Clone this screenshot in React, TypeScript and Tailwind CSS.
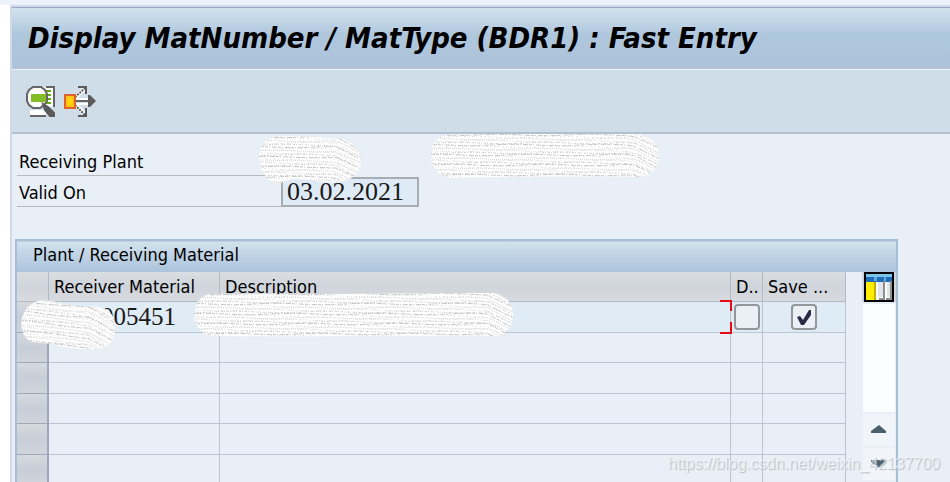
import type { ReactNode } from "react";

type ScribbleProps = {
  width: number;
  height: number;
  outline: string;
  id: string;
  tilt?: number;
  className: string;
};

const greys = ["#c4c4c4", "#e2e2e2", "#d2d2d2", "#e8e8e8", "#cccccc"];
const dashes = ["3 1 1 2 5 1", "1 1", "1 2 2 1", "1 3 2 2", "7 1 2 1 1 2"];

// White marker scribble that hides confidential values
const Scribble = ({ width, height, outline, id, tilt = 0, className }: ScribbleProps) => {
  const lines = [];
  for (let i = -8; i < height / 2 + 4; i++) {
    const y = i * 2 + 1;
    let d = `M-4 ${y}`;
    for (let x = 6; x < width + 8; x += 9) {
      const wave = Math.sin(x * 0.07 + i * 2.3) * 0.7;
      const fall = x > width - 26 ? (x - width + 26) * 0.5 : 0;
      d += ` L${x} ${(y + wave + fall + (x * tilt) / 100).toFixed(1)}`;
    }
    lines.push(
      <path
        key={i}
        d={d}
        fill="none"
        stroke={greys[(i + 10) % 5]}
        strokeWidth="1"
        strokeDasharray={dashes[(i * 3 + 30) % 5]}
        strokeDashoffset={(i * 7) % 11}
      />
    );
  }
  return (
    <svg
      width={width}
      height={height}
      aria-hidden="true"
      className={`absolute z-10 pointer-events-none ${className}`}
    >
      <clipPath id={id}>
        <path d={outline} />
      </clipPath>
      <path d={outline} fill="#fff" />
      <g clipPath={`url(#${id})`}>{lines}</g>
    </svg>
  );
};

const DetailIcon = () => (
  <svg width="32" height="34" viewBox="0 0 32 34" aria-hidden="true">
    <path d="M18 3h11v20H18z" fill="#fff" />
    <path d="M21 3h8v20" fill="none" stroke="#666" strokeWidth="2" />
    <path d="M20 7h6M22 11h4M22 15h4M21 19h5" stroke="#5fae0a" strokeWidth="2" />
    <path d="M5 26h16v5H5z" fill="#fff" />
    <path d="M5 32h16" stroke="#666" strokeWidth="2" />
    <path
      d="M8 3h8l4 3 2 4v7l-3 4-4 3H8l-4-3-2-4v-7l2-4z"
      fill="#fff"
      stroke="#666"
      strokeWidth="2"
    />
    <path d="M6 10h15v8H6z" fill="#84bd27" />
    <path d="M18 20l5 3 6 6v3h-4l-5-6z" fill="#5b5b5b" stroke="#5b5b5b" strokeWidth="2" />
  </svg>
);

const SpreadIcon = () => (
  <svg width="34" height="34" viewBox="0 0 34 34" aria-hidden="true">
    <path d="M12 15h14M12 20h14" stroke="#fff" strokeWidth="2" />
    <path d="M12 17h15" stroke="#666" strokeWidth="2" />
    <path d="M25 11h2l6 6-6 6h-2z" fill="#5b5b5b" />
    <path d="M13 13L22 4M13 21l9 9" stroke="#fff" strokeWidth="4" />
    <path d="M12 13L22 4M12 21l10 10" stroke="#555" strokeWidth="2" strokeDasharray="2 1" />
    <path d="M15 3h8v7M15 32h8v-8" fill="none" stroke="#5b5b5b" strokeWidth="2" />
    <path d="M2 11h10v13H2z" fill="#ffc21a" stroke="#e0622a" strokeWidth="2" />
    <path d="M5 14h4v7H5z" fill="#ffd60a" />
  </svg>
);

const ColumnsIcon = () => (
  <svg width="30" height="30" viewBox="0 0 30 30" aria-hidden="true">
    <path d="M0 0h30v30H0z" fill="#000" />
    <path d="M2 2h26v26H2z" fill="#fff" />
    <path d="M2 2h26v3H2z" fill="#7fc4ea" />
    <path d="M2 5h26v5H2z" fill="#1e6db6" />
    <path d="M10 5h3v4h-3zM20 5h2v4h-2z" fill="#5fa9dc" />
    <path d="M2 10h9v18H2z" fill="#ffed00" />
    <path d="M10 10h2v18h-2z" fill="#c4ae00" />
    <path d="M14 10h5v15h-5zM23 10h3v15h-3z" fill="#e0e5ec" />
    <path d="M19 9h2v19h-6v-2h4zM26 9h2v19h-6v-2h4z" fill="#8f8f8f" />
  </svg>
);

const Tick = ({ label, checked }: { label: string; checked?: boolean }) => (
  <label className="relative block w-[26px] h-[26px] mx-auto">
    <input
      type="checkbox"
      aria-label={label}
      defaultChecked={checked}
      className="peer block appearance-none w-full h-full rounded-sm border-2 border-[#949699] bg-[#eaf0f6]"
    />
    <svg
      viewBox="0 0 26 26"
      aria-hidden="true"
      className="absolute inset-0 pointer-events-none hidden peer-checked:block"
    >
      <path d="M6 13l3-1 3 4 6-10h2v5l-7 10h-3z" fill="#2c2b47" />
    </svg>
  </label>
);

const HeaderCell = ({ children }: { children?: ReactNode }) => (
  <th
    scope="col"
    className="h-[30px] p-0 pl-[5px] text-left font-normal whitespace-nowrap border-r border-b border-[#b0bac8] bg-linear-to-b from-[#d9dee1] via-[#d0d4dc] to-[#d8dcdf]"
  >
    {children}
  </th>
);

const cell = "p-0 border-r border-b border-[#bac4d3]";
const selector =
  "p-0 border-r-2 border-b border-[#9ba8b9] bg-linear-to-b from-[#d6dadf] via-[#c8ced7] to-[#d0d5dc]";
const emptyRows = [1, 2, 3, 4, 5];

const App = () => {
  return (
    <div className="h-screen overflow-hidden flex flex-col bg-[#eef2fa] pt-[5px] font-['DejaVu_Sans_Condensed','Noto_Sans',sans-serif] text-[18px] leading-6 text-black">
      <div className="flex-1 min-h-0 flex bg-white">
        <div className="w-[10px] shrink-0" />
        <div className="flex-1 min-w-0 flex flex-col border-l-2 border-t-2 border-[#d3d9e8] bg-[#e8eff6]">
          {/* TITLE */}
          <header className="h-[62px] shrink-0 flex items-center px-4 border-t border-b-2 border-t-[#98a9c2] border-b-[#b2c1d3] bg-linear-to-b from-[#d3e2ef] via-[#afc7dd] via-45% to-[#adc3db]">
            <h1 className="font-bold italic text-[29px] leading-8 whitespace-nowrap">
              Display MatNumber / MatType (BDR1) : Fast Entry
            </h1>
          </header>

          {/* TOOLBAR */}
          <div className="h-[65px] shrink-0 flex items-center gap-1.5 px-3 border-t border-b-2 border-t-[#edf3f8] border-b-[#b3c0d0] bg-[#cfdde8]">
            <button type="button" aria-label="Display details" className="pl-px">
              <DetailIcon />
            </button>
            <button type="button" aria-label="Distribute">
              <SpreadIcon />
            </button>
          </div>

          {/* FORM */}
          <div className="relative shrink-0 pl-[5px] pt-[11px]">
            <div className="w-[265px] h-[31px] border-b border-[#b7bbc0] pl-0.5 pt-[5px]">
              Receiving Plant
            </div>
            <div className="flex">
              <label
                htmlFor="validOn"
                className="w-[264px] h-[31px] border-b border-[#b7bbc0] pl-0.5 pt-[5px]"
              >
                Valid On
              </label>
              <input
                id="validOn"
                readOnly
                defaultValue="03.02.2021"
                className="w-[138px] h-[30px] mt-px px-1 border-2 border-[#a9adb2] bg-[#deeaf5] font-['Liberation_Serif',serif] text-[26px] leading-6 text-[#1a1a1a]"
              />
            </div>
            <Scribble
              id="plantCode"
              width={103}
              height={48}
              className="left-[246px] top-[2px]"
              outline="M12 2C25-1 60 0 78 3C92 2 102 12 103 24C103 36 94 45 82 46C66 48 48 42 34 43C22 49 11 48 6 38C-2 28-2 10 12 2Z"
            />
            <Scribble
              id="plantName"
              width={228}
              height={44}
              className="left-[419px] top-0"
              outline="M16 1C70-1 160 1 208 0C220 2 228 10 228 21C228 34 220 42 208 43C150 42 70 43 20 44C8 43 0 33 0 22C0 11 5 3 16 1Z"
            />
          </div>

          {/* MATERIALS */}
          <section
            aria-label="Plant / Receiving Material"
            className="relative mt-[32px] ml-[3px] mr-[52px] flex-1 min-h-0 flex flex-col border-2 border-b-0 border-[#a5bfd8]"
          >
            <h2 className="h-[31px] shrink-0 pl-4 pt-px border-t border-[#c5d0dd] bg-linear-to-b from-[#d2e1ed] to-[#abc3dc]">
              Plant / Receiving Material
            </h2>
            <div className="flex-1 min-h-0 flex overflow-hidden">
              <div className="flex-1 min-w-0">
                <table className="w-full table-fixed border-separate border-spacing-0">
                  <colgroup>
                    <col className="w-[32px]" />
                    <col className="w-[171px]" />
                    <col />
                    <col className="w-[32px]" />
                    <col className="w-[83px]" />
                  </colgroup>
                  <thead>
                    <tr>
                      <HeaderCell />
                      <HeaderCell>Receiver Material</HeaderCell>
                      <HeaderCell>Description</HeaderCell>
                      <HeaderCell>D..</HeaderCell>
                      <HeaderCell>Save ...</HeaderCell>
                    </tr>
                  </thead>
                  <tbody>
                    <tr className="h-[31px] bg-[#dfebf5]">
                      <td className={selector} />
                      <td
                        className={`${cell} pl-[52px] font-['Liberation_Serif',serif] text-[25px] text-[#1a1a1a]`}
                      >
                        005451
                      </td>
                      <td className={`${cell} relative`}>
                        <svg
                          width="12"
                          height="34"
                          aria-hidden="true"
                          className="absolute -right-[2px] -top-[2px]"
                        >
                          <path
                            d="M0 1h11v10M0 33h11V22"
                            fill="none"
                            stroke="#e60a14"
                            strokeWidth="2"
                          />
                        </svg>
                      </td>
                      <td className={cell}>
                        <Tick label="D" />
                      </td>
                      <td className={cell}>
                        <Tick label="Save" checked />
                      </td>
                    </tr>
                    {emptyRows.map((row) => (
                      <tr key={row} className="even:h-[30px] odd:h-[31px]">
                        <td className={selector} />
                        <td className={cell} />
                        <td className={cell} />
                        <td className={cell} />
                        <td className={cell} />
                      </tr>
                    ))}
                  </tbody>
                </table>
              </div>

              {/* SCROLL BAR */}
              <div className="w-[34px] ml-4 shrink-0 flex flex-col items-center gap-0.5">
                <button
                  type="button"
                  aria-label="Configure columns"
                  className="w-full h-[30px] shrink-0 flex justify-center bg-[#d0d5dd]"
                >
                  <ColumnsIcon />
                </button>
                <div className="w-[32px] flex-1 bg-[#fbfcfd]" />
                <button
                  type="button"
                  aria-label="Scroll up"
                  className="w-[32px] h-[32px] shrink-0 flex items-center justify-center bg-[#f1f5f9]"
                >
                  <svg width="18" height="10" aria-hidden="true">
                    <path d="M9 0l7 6v2H1V6z" fill="#4c5f6c" />
                  </svg>
                </button>
                <button
                  type="button"
                  aria-label="Scroll down"
                  className="w-[32px] h-[32px] shrink-0 mb-0.5 flex items-center justify-center bg-[#f1f5f9]"
                >
                  <svg width="18" height="10" aria-hidden="true">
                    <path d="M9 9L1 3V1h15v2z" fill="#4c5f6c" />
                  </svg>
                </button>
              </div>
            </div>
            <Scribble
              id="materialCode"
              width={96}
              height={50}
              tilt={10}
              className="left-[3px] top-[59px]"
              outline="M18 1C30-1 42 4 56 6C68 6 82 5 90 12C98 22 97 40 87 46C72 52 48 48 36 45C26 42 14 46 6 38C-3 26 1 6 18 1Z"
            />
            <Scribble
              id="materialText"
              width={319}
              height={44}
              className="left-[177px] top-[52px]"
              outline="M16 1C90 2 220 0 300 0C312 2 319 11 319 22C319 34 312 43 300 43C200 42 90 44 20 43C7 42 0 33 0 22C0 11 6 3 16 1Z"
            />
          </section>
        </div>
      </div>
      <p className="absolute right-[10px] bottom-[6px] z-20 font-['Liberation_Sans',sans-serif] text-[16px] leading-6 text-white/60 [text-shadow:1px_1px_1px_#b4bcc5]">
        https://blog.csdn.net/weixin_42137700
      </p>
    </div>
  );
};

export default App;
